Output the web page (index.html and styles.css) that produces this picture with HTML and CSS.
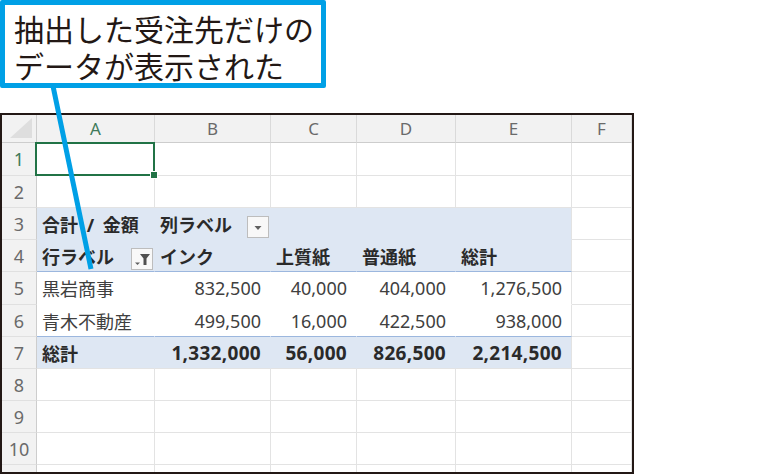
FILE: index.html
```html
<!DOCTYPE html>
<html lang="ja">
<head>
<meta charset="utf-8">
<link rel="stylesheet" href="styles.css">
</head>
<body>
<div class="page">
  <div class="callout"><p class="l1">抽出した受注先だけの</p><p class="l2">データが表示された</p></div>
  <div class="sheet">
    <div class="grid">
      <div class="c h corner"><span class="tri"></span></div>
      <div class="c h selh">A</div>
      <div class="c h">B</div>
      <div class="c h">C</div>
      <div class="c h">D</div>
      <div class="c h">E</div>
      <div class="c h">F</div>

      <div class="c rh selh">1</div>
      <div class="c a1"><span class="selbox"><span class="handle"></span></span></div>
      <div class="c"></div><div class="c"></div><div class="c"></div><div class="c"></div><div class="c"></div>

      <div class="c rh">2</div>
      <div class="c"></div><div class="c"></div><div class="c"></div><div class="c"></div><div class="c"></div><div class="c"></div>

      <div class="c rh">3</div>
      <div class="c pv b ws">合計 / 金額</div>
      <div class="c pv b btncell">列ラベル<span class="fbtn"><svg width="20" height="20" viewBox="0 0 20 20"><polygon points="6.5,9 13.5,9 10,13" fill="#606060"/></svg></span></div>
      <div class="c pv"></div>
      <div class="c pv"></div>
      <div class="c pv pe"></div>
      <div class="c"></div>

      <div class="c rh">4</div>
      <div class="c pv b btncell line">行ラベル<span class="fbtn fbtn2"><svg width="20" height="20" viewBox="0 0 20 20"><polygon points="8,5 18,5 14.5,9.5 14.5,16 11.5,16 11.5,9.5" fill="#505050"/><polygon points="3,13.5 8,13.5 5.5,16" fill="#606060"/></svg></span></div>
      <div class="c pv b line">インク</div>
      <div class="c pv b line">上質紙</div>
      <div class="c pv b line">普通紙</div>
      <div class="c pv b line pe">総計</div>
      <div class="c"></div>

      <div class="c rh">5</div>
      <div class="c pw t">黒岩商事</div>
      <div class="c pw n">832,500</div>
      <div class="c pw n">40,000</div>
      <div class="c pw n">404,000</div>
      <div class="c pw n pe">1,276,500</div>
      <div class="c"></div>

      <div class="c rh">6</div>
      <div class="c pw t line">青木不動産</div>
      <div class="c pw n line">499,500</div>
      <div class="c pw n line">16,000</div>
      <div class="c pw n line">422,500</div>
      <div class="c pw n line pe">938,000</div>
      <div class="c"></div>

      <div class="c rh">7</div>
      <div class="c pv b tot">総計</div>
      <div class="c pv b n tot">1,332,000</div>
      <div class="c pv b n tot">56,000</div>
      <div class="c pv b n tot">826,500</div>
      <div class="c pv b n tot pe">2,214,500</div>
      <div class="c"></div>

      <div class="c rh">8</div>
      <div class="c"></div><div class="c"></div><div class="c"></div><div class="c"></div><div class="c"></div><div class="c"></div>
      <div class="c rh">9</div>
      <div class="c"></div><div class="c"></div><div class="c"></div><div class="c"></div><div class="c"></div><div class="c"></div>
      <div class="c rh">10</div>
      <div class="c"></div><div class="c"></div><div class="c"></div><div class="c"></div><div class="c"></div><div class="c"></div>
      <div class="c rh"></div>
      <div class="c"></div><div class="c"></div><div class="c"></div><div class="c"></div><div class="c"></div><div class="c"></div>
    </div>
  </div>
  <svg class="pointer" width="783" height="474" viewBox="0 0 783 474"><line x1="53" y1="86" x2="91" y2="269" stroke="#00a0e6" stroke-width="5"/></svg>
</div>
</body>
</html>
```
FILE: styles.css
```css
html, body {
  margin: 0;
  padding: 0;
  background: #ffffff;
}
.page {
  position: relative;
  width: 783px;
  height: 474px;
  overflow: hidden;
  font-family: "Noto Sans", "Noto Sans CJK JP", sans-serif;
}
.callout {
  width: 326px;
  height: 88px;
  box-sizing: border-box;
  border: 5px solid #00a0e6;
  border-radius: 2px;
  padding: 5px 0 0 9px;
  background: #ffffff;
  display: flex;
  flex-direction: column;
  gap: 1px;
}
.callout p {
  margin: 0;
  font-family: "Noto Sans CJK JP", sans-serif;
  font-size: 30px;
  line-height: 36px;
  height: 36px;
  color: #231815;
  white-space: nowrap;
}
.sheet {
  margin-top: 25px;
  width: 634px;
  height: 361px;
  box-sizing: border-box;
  border: 2px solid #231815;
  overflow: hidden;
}
.grid {
  display: grid;
  grid-template-columns: 35px 118px 116px 86px 99px 116px 60px;
  grid-template-rows: 28px 33px 32px 32px 32px 33px 32px 32px 32px 32px 32px 32px;
}
.c {
  box-sizing: border-box;
  border-right: 1px solid #e3e3e3;
  border-bottom: 1px solid #e3e3e3;
  display: flex;
  align-items: center;
  padding: 0 5px;
  font-size: 18px;
  color: #3c3c3c;
  white-space: nowrap;
  position: relative;
}
.h {
  background: #f2f2f2;
  border-right-color: #dadada;
  border-bottom-color: #cdcdcd;
  justify-content: center;
  font-size: 17px;
  color: #6a6a6a;
  padding: 0;
}
.corner {
  border-right-color: #cdcdcd;
}
.tri {
  position: absolute;
  right: 4px;
  bottom: 4px;
  width: 0;
  height: 0;
  border-left: 22px solid transparent;
  border-bottom: 20px solid #dedede;
}
.rh {
  background: #f2f2f2;
  border-right-color: #cdcdcd;
  border-bottom-color: #e0e0e0;
  justify-content: center;
  font-size: 18px;
  color: #6a6a6a;
  padding: 0;
}
.selh {
  color: #3f7a5a;
}
.selbox {
  position: absolute;
  left: -2px;
  top: -1px;
  right: -1px;
  bottom: -1px;
  border: 2px solid #217346;
  z-index: 2;
}
.handle {
  position: absolute;
  right: -5px;
  bottom: -5px;
  width: 6px;
  height: 6px;
  background: #217346;
  border: 1px solid #ffffff;
}
.pv {
  background: #dee7f3;
  border-right-color: transparent;
  border-bottom-color: transparent;
}
.pw {
  background: #ffffff;
  border-right-color: transparent;
  border-bottom-color: transparent;
}
.pe {
  border-right-color: #e3e3e3;
}
.line {
  border-bottom: 1px solid #9cb7de;
}
.tot {
  border-bottom-color: #e3e3e3;
}
.b {
  font-weight: 700;
  color: #2a2a2a;
}
.ws {
  word-spacing: 4px;
}
.t {
  color: #404040;
}
.n {
  justify-content: flex-end;
  padding-right: 9px;
  color: #404040;
}
.b.n {
  color: #2a2a2a;
  font-size: 19px;
  letter-spacing: 0.3px;
}
.btncell {
  padding-right: 1px;
}
.fbtn {
  margin-left: auto;
  align-self: flex-end;
  margin-bottom: 1px;
  width: 22px;
  height: 22px;
  box-sizing: border-box;
  border: 1px solid #bdbdbd;
  background: #f8f8f8;
  display: flex;
  align-items: center;
  justify-content: center;
}
.pointer {
  position: absolute;
  left: 0;
  top: 0;
  z-index: 5;
  pointer-events: none;
}
```
